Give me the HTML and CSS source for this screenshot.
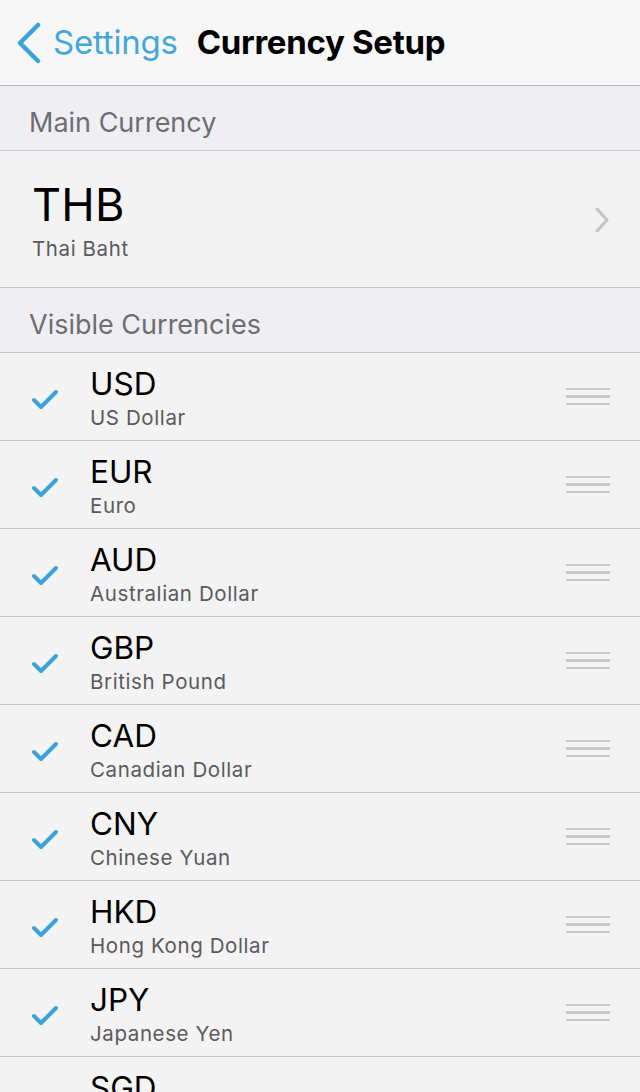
FILE: index.html
```html
<!DOCTYPE html>
<html lang="en">

<head>
  <meta name="viewport" content="width=device-width, initial-scale=1.0" />
  <title>Currency Setup</title>
  <link rel="stylesheet" href="styles.css">
</head>

<body>
  <div class="nav">
    <a class="back">
      <svg width="28" height="42" viewBox="0 0 28 42"><path d="M23 3 L5 21 L23 39" fill="none" stroke="#3ca3da" stroke-width="4.5" stroke-linecap="round" stroke-linejoin="round"/></svg>
      <span>Settings</span>
    </a>
    <div class="title">Currency Setup</div>
  </div>

  <div class="section-header">Main Currency</div>
  <div class="main-row">
    <div class="main-text">
      <div class="main-code">THB</div>
      <div class="main-name">Thai Baht</div>
    </div>
    <svg class="chevron" width="16" height="28" viewBox="0 0 16 28"><path d="M3 3 L13 14 L3 25" fill="none" stroke="#c4c4c8" stroke-width="3" stroke-linecap="round" stroke-linejoin="round"/></svg>
  </div>

  <div class="section-header">Visible Currencies</div>
  <div class="list">
    <div class="row">
      <svg class="check" width="28" height="22" viewBox="0 0 28 22"><path d="M3 12 L10 19 L25 4" fill="none" stroke="#3ca3da" stroke-width="4" stroke-linecap="round" stroke-linejoin="round"/></svg>
      <div class="text"><div class="code">USD</div><div class="name">US Dollar</div></div>
      <div class="handle"><i></i><i></i><i></i></div>
    </div>
    <div class="row">
      <svg class="check" width="28" height="22" viewBox="0 0 28 22"><path d="M3 12 L10 19 L25 4" fill="none" stroke="#3ca3da" stroke-width="4" stroke-linecap="round" stroke-linejoin="round"/></svg>
      <div class="text"><div class="code">EUR</div><div class="name">Euro</div></div>
      <div class="handle"><i></i><i></i><i></i></div>
    </div>
    <div class="row">
      <svg class="check" width="28" height="22" viewBox="0 0 28 22"><path d="M3 12 L10 19 L25 4" fill="none" stroke="#3ca3da" stroke-width="4" stroke-linecap="round" stroke-linejoin="round"/></svg>
      <div class="text"><div class="code">AUD</div><div class="name">Australian Dollar</div></div>
      <div class="handle"><i></i><i></i><i></i></div>
    </div>
    <div class="row">
      <svg class="check" width="28" height="22" viewBox="0 0 28 22"><path d="M3 12 L10 19 L25 4" fill="none" stroke="#3ca3da" stroke-width="4" stroke-linecap="round" stroke-linejoin="round"/></svg>
      <div class="text"><div class="code">GBP</div><div class="name">British Pound</div></div>
      <div class="handle"><i></i><i></i><i></i></div>
    </div>
    <div class="row">
      <svg class="check" width="28" height="22" viewBox="0 0 28 22"><path d="M3 12 L10 19 L25 4" fill="none" stroke="#3ca3da" stroke-width="4" stroke-linecap="round" stroke-linejoin="round"/></svg>
      <div class="text"><div class="code">CAD</div><div class="name">Canadian Dollar</div></div>
      <div class="handle"><i></i><i></i><i></i></div>
    </div>
    <div class="row">
      <svg class="check" width="28" height="22" viewBox="0 0 28 22"><path d="M3 12 L10 19 L25 4" fill="none" stroke="#3ca3da" stroke-width="4" stroke-linecap="round" stroke-linejoin="round"/></svg>
      <div class="text"><div class="code">CNY</div><div class="name">Chinese Yuan</div></div>
      <div class="handle"><i></i><i></i><i></i></div>
    </div>
    <div class="row">
      <svg class="check" width="28" height="22" viewBox="0 0 28 22"><path d="M3 12 L10 19 L25 4" fill="none" stroke="#3ca3da" stroke-width="4" stroke-linecap="round" stroke-linejoin="round"/></svg>
      <div class="text"><div class="code">HKD</div><div class="name">Hong Kong Dollar</div></div>
      <div class="handle"><i></i><i></i><i></i></div>
    </div>
    <div class="row">
      <svg class="check" width="28" height="22" viewBox="0 0 28 22"><path d="M3 12 L10 19 L25 4" fill="none" stroke="#3ca3da" stroke-width="4" stroke-linecap="round" stroke-linejoin="round"/></svg>
      <div class="text"><div class="code">JPY</div><div class="name">Japanese Yen</div></div>
      <div class="handle"><i></i><i></i><i></i></div>
    </div>
    <div class="row">
      <svg class="check" width="28" height="22" viewBox="0 0 28 22"><path d="M3 12 L10 19 L25 4" fill="none" stroke="#3ca3da" stroke-width="4" stroke-linecap="round" stroke-linejoin="round"/></svg>
      <div class="text"><div class="code">SGD</div><div class="name">Singapore Dollar</div></div>
      <div class="handle"><i></i><i></i><i></i></div>
    </div>
  </div>
</body>

</html>
```

FILE: styles.css
```css
* {
  padding: 0;
  margin: 0;
  box-sizing: border-box;
}

html,
body {
  height: 100%;
  overflow: hidden;
}

body {
  font-family: Inter, "Noto Sans", sans-serif;
  background-color: #f3f3f3;
  color: #000;
}

.nav {
  height: 86px;
  display: flex;
  align-items: center;
  padding-left: 15px;
  background-color: #f7f7f7;
  border-bottom: 1px solid #b8b8bc;
}

.back {
  display: flex;
  align-items: center;
  gap: 10px;
  color: #43a8d8;
  font-size: 33px;
}

.back span {
  letter-spacing: -0.2px;
  margin-top: -2px;
}

.title {
  margin-left: 19px;
  margin-top: -2px;
  font-size: 33px;
  font-weight: 700;
  letter-spacing: -0.3px;
}

.section-header {
  height: 65px;
  display: flex;
  align-items: center;
  padding: 8px 0 0 29px;
  font-size: 27px;
  color: #6d6d72;
  background-color: #efeff3;
  border-bottom: 1px solid #c8c7cc;
}

.main-row {
  height: 137px;
  display: flex;
  align-items: center;
  justify-content: space-between;
  padding: 0 30px 0 32px;
  border-bottom: 1px solid #c8c7cc;
}

.main-code {
  font-size: 45px;
  line-height: 54px;
  letter-spacing: 0.3px;
}

.main-name {
  margin-top: 4px;
  font-size: 20.5px;
  letter-spacing: 0.6px;
  color: #5a5a5e;
}

.chevron {
  margin-top: 2px;
}

.row {
  height: 88px;
  display: flex;
  align-items: center;
  padding: 0 30px 0 31px;
  border-bottom: 1px solid #c8c7cc;
}

.check {
  margin-top: 4px;
}

.text {
  margin-left: 31px;
  padding-top: 3px;
  flex: 1;
}

.code {
  font-size: 31.5px;
  line-height: 36px;
}

.name {
  margin-top: 3px;
  font-size: 20.5px;
  letter-spacing: 0.6px;
  color: #5a5a5e;
}

.handle {
  width: 44px;
  display: flex;
  flex-direction: column;
  gap: 5px;
}

.handle i {
  display: block;
  height: 2.5px;
  background-color: #c7c7cc;
}
```
